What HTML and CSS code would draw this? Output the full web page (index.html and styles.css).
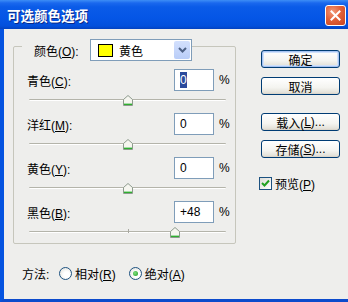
FILE: index.html
```html
<!DOCTYPE html>
<html>
<head>
<meta charset="utf-8">
<link rel="stylesheet" href="styles.css">
</head>
<body>
<div class="window">
  <div class="titlebar">
    <span class="title">可选颜色选项</span>
    <span class="close"><svg width="11" height="11" viewBox="0 0 11 11"><path d="M1.5 1.5 L9.5 9.5 M9.5 1.5 L1.5 9.5" stroke="#fff" stroke-width="2" stroke-linecap="square"/></svg></span>
  </div>
  <div class="client">
    <div class="left">
      <div class="group">
        <div class="legend">
          <span class="lbl">颜色(<u>O</u>):</span>
          <div class="select">
            <span class="swatch"></span>
            <span class="sel-text">黄色</span>
            <span class="arrow"><svg width="9" height="6" viewBox="0 0 9 6"><path d="M1 1 L4.5 4.5 L8 1" fill="none" stroke="#4d6185" stroke-width="2"/></svg></span>
          </div>
        </div>

        <div class="row first"><span class="lbl">青色(<u>C</u>):</span><span class="input"><span class="hl">0</span></span><span class="pct">%</span></div>
        <div class="slider"><span class="track"></span><span class="tick"></span><span class="thumb" style="--v:50%"><svg width="10" height="11" viewBox="0 0 10 11"><path d="M0.5 4.5 L5 0.5 L9.5 4.5 V10.5 H0.5 Z" fill="#f6f6f0" stroke="#8d9a8d"/><path d="M1 9.5 H9" stroke="#2fae2f"/><path d="M1 8.5 H9" stroke="#a6dca6"/></svg></span></div>

        <div class="row"><span class="lbl">洋红(<u>M</u>):</span><span class="input">0</span><span class="pct">%</span></div>
        <div class="slider"><span class="track"></span><span class="tick"></span><span class="thumb" style="--v:50%"><svg width="10" height="11" viewBox="0 0 10 11"><path d="M0.5 4.5 L5 0.5 L9.5 4.5 V10.5 H0.5 Z" fill="#f6f6f0" stroke="#8d9a8d"/><path d="M1 9.5 H9" stroke="#2fae2f"/><path d="M1 8.5 H9" stroke="#a6dca6"/></svg></span></div>

        <div class="row"><span class="lbl">黄色(<u>Y</u>):</span><span class="input">0</span><span class="pct">%</span></div>
        <div class="slider"><span class="track"></span><span class="tick"></span><span class="thumb" style="--v:50%"><svg width="10" height="11" viewBox="0 0 10 11"><path d="M0.5 4.5 L5 0.5 L9.5 4.5 V10.5 H0.5 Z" fill="#f6f6f0" stroke="#8d9a8d"/><path d="M1 9.5 H9" stroke="#2fae2f"/><path d="M1 8.5 H9" stroke="#a6dca6"/></svg></span></div>

        <div class="row"><span class="lbl">黑色(<u>B</u>):</span><span class="input">+48</span><span class="pct">%</span></div>
        <div class="slider"><span class="track"></span><span class="tick"></span><span class="thumb" style="--v:74%"><svg width="10" height="11" viewBox="0 0 10 11"><path d="M0.5 4.5 L5 0.5 L9.5 4.5 V10.5 H0.5 Z" fill="#f6f6f0" stroke="#8d9a8d"/><path d="M1 9.5 H9" stroke="#2fae2f"/><path d="M1 8.5 H9" stroke="#a6dca6"/></svg></span></div>
      </div>

      <div class="method">
        <span class="mlabel">方法:</span>
        <span class="radio"></span><span class="rlabel">相对(<u>R</u>)</span>
        <span class="radio on"><span class="dot"></span></span><span class="rlabel">绝对(<u>A</u>)</span>
      </div>
    </div>

    <div class="right">
      <div class="btn default">确定</div>
      <div class="btn">取消</div>
      <div class="btn gap">载入(<u>L</u>)...</div>
      <div class="btn">存储(<u>S</u>)...</div>
      <div class="check-row">
        <span class="checkbox"><svg width="11" height="11" viewBox="0 0 11 11"><path d="M2 5 L4.5 7.5 L9 2.5" fill="none" stroke="#21a121" stroke-width="2"/></svg></span>
        <span class="clabel">预览(<u>P</u>)</span>
      </div>
    </div>
  </div>
</div>
</body>
</html>
```

FILE: styles.css
```css
html, body {
  margin: 0;
  padding: 0;
  overflow: hidden;
  background: #eeeeec;
}

.window {
  width: 348px;
  height: 302px;
  display: flex;
  flex-direction: column;
  font-family: "Liberation Sans", "Noto Sans CJK SC", sans-serif;
  font-size: 12px;
  color: #000;
}

.titlebar {
  height: 29px;
  flex: none;
  display: flex;
  align-items: center;
  justify-content: space-between;
  padding: 0 2px 0 7px;
  background: linear-gradient(to bottom, #3d8ef6 0px, #1a68ee 3px, #0a5be8 7px, #0556e6 18px, #0250dc 26px, #0342c0 29px);
}

.title {
  color: #fff;
  font-weight: bold;
  font-size: 13.5px;
  text-shadow: 1px 1px 0 #0a2a8a;
  font-family: "Noto Sans CJK SC", sans-serif;
}

.close {
  width: 19px;
  height: 19px;
  margin-top: 2px;
  border: 1px solid #fff;
  border-radius: 3px;
  background: radial-gradient(circle at 35% 30%, #f29a7a 0%, #e2613a 45%, #c8431d 100%);
  display: flex;
  align-items: center;
  justify-content: center;
}

.client {
  flex: 1;
  display: flex;
  border-left: 4px solid #0553e0;
  border-bottom: 3px solid #0c4bcc;
  background: #eeeeec;
}

.left {
  padding: 17px 0 0 9px;
  display: flex;
  flex-direction: column;
}

.group {
  width: 223px;
  height: 198px;
  box-sizing: border-box;
  border: 1px solid #c6c6bc;
  border-radius: 2px;
}

.legend {
  display: flex;
  align-items: center;
  width: fit-content;
  margin: -8px 0 0 8px;
  padding-left: 12px;
  background: #eeeeec;
}

.legend .lbl {
  width: 56px;
}

.select {
  width: 102px;
  height: 22px;
  box-sizing: border-box;
  border: 1px solid #7f9db9;
  background: #fff;
  display: flex;
  align-items: center;
  padding-left: 7px;
}

.swatch {
  width: 15px;
  height: 13px;
  box-sizing: border-box;
  border: 1px solid #000;
  background: #ffff00;
}

.sel-text {
  margin-left: 6px;
}

.arrow {
  margin-left: auto;
  margin-right: 1px;
  width: 16px;
  height: 18px;
  border-radius: 2px;
  background: linear-gradient(#d3e0fd, #b9cdf8);
  display: flex;
  align-items: center;
  justify-content: center;
}

.row {
  display: flex;
  align-items: center;
  height: 22px;
  padding-left: 13px;
}

.row.first {
  margin-top: 8px;
}

.row .lbl {
  flex: 1;
}

.input {
  width: 40px;
  height: 22px;
  box-sizing: border-box;
  border: 1px solid #7f9db9;
  background: #fff;
  padding-left: 5px;
  display: flex;
  align-items: center;
}

.hl {
  background: #2b4a9c;
  color: #fff;
  line-height: 16px;
}

.pct {
  width: 17px;
  padding-left: 5px;
  box-sizing: border-box;
  margin-right: 4px;
}

.slider {
  position: relative;
  height: 22px;
  margin: 0 9px 0 15px;
  padding-top: 8px;
  box-sizing: border-box;
}

.track {
  display: block;
  height: 1px;
  background: #b4b4aa;
  border-bottom: 1px solid #fff;
  border-radius: 1px;
}

.tick {
  position: absolute;
  left: 50%;
  top: 6px;
  width: 1px;
  height: 4px;
  background: #a8a8a0;
}

.thumb {
  position: absolute;
  top: 4px;
  left: calc(var(--v) - 5px);
  width: 10px;
  height: 11px;
  display: block;
  line-height: 0;
}

.method {
  display: flex;
  align-items: center;
  height: 16px;
  margin-top: 21px;
  padding-left: 9px;
}

.mlabel {
  width: 37px;
}

.radio {
  width: 13px;
  height: 13px;
  box-sizing: border-box;
  border: 1px solid #1c5180;
  border-radius: 50%;
  background: radial-gradient(circle at 60% 60%, #ffffff 30%, #dcdcd5 100%);
  display: flex;
  align-items: center;
  justify-content: center;
}

.radio.on {
  margin-left: 13px;
}

.dot {
  width: 5px;
  height: 5px;
  border-radius: 50%;
  background: radial-gradient(circle at 40% 40%, #7fe07f, #1f9a1f);
}

.rlabel {
  margin-left: 3px;
}

.right {
  margin-left: 25px;
  padding-top: 21px;
  display: flex;
  flex-direction: column;
}

.btn {
  width: 79px;
  height: 18px;
  box-sizing: border-box;
  border: 1px solid #003c74;
  border-radius: 3px;
  background: linear-gradient(#ffffff 0%, #f4f4f0 60%, #e4e2da 90%, #d6d0c5 100%);
  display: flex;
  align-items: center;
  justify-content: center;
  margin-bottom: 9px;
}

.btn.default {
  box-shadow: inset 0 0 0 1px #a6c3f2, inset 0 0 0 2px #d0e1fa;
}

.btn.gap {
  margin-top: 9px;
}

.check-row {
  display: flex;
  align-items: center;
  margin-top: 8px;
  margin-left: -2px;
}

.checkbox {
  width: 13px;
  height: 13px;
  box-sizing: border-box;
  border: 1px solid #1c5180;
  background: linear-gradient(135deg, #dcdcd7, #ffffff);
  display: flex;
  align-items: center;
  justify-content: center;
}

.clabel {
  margin-left: 3px;
}
```
